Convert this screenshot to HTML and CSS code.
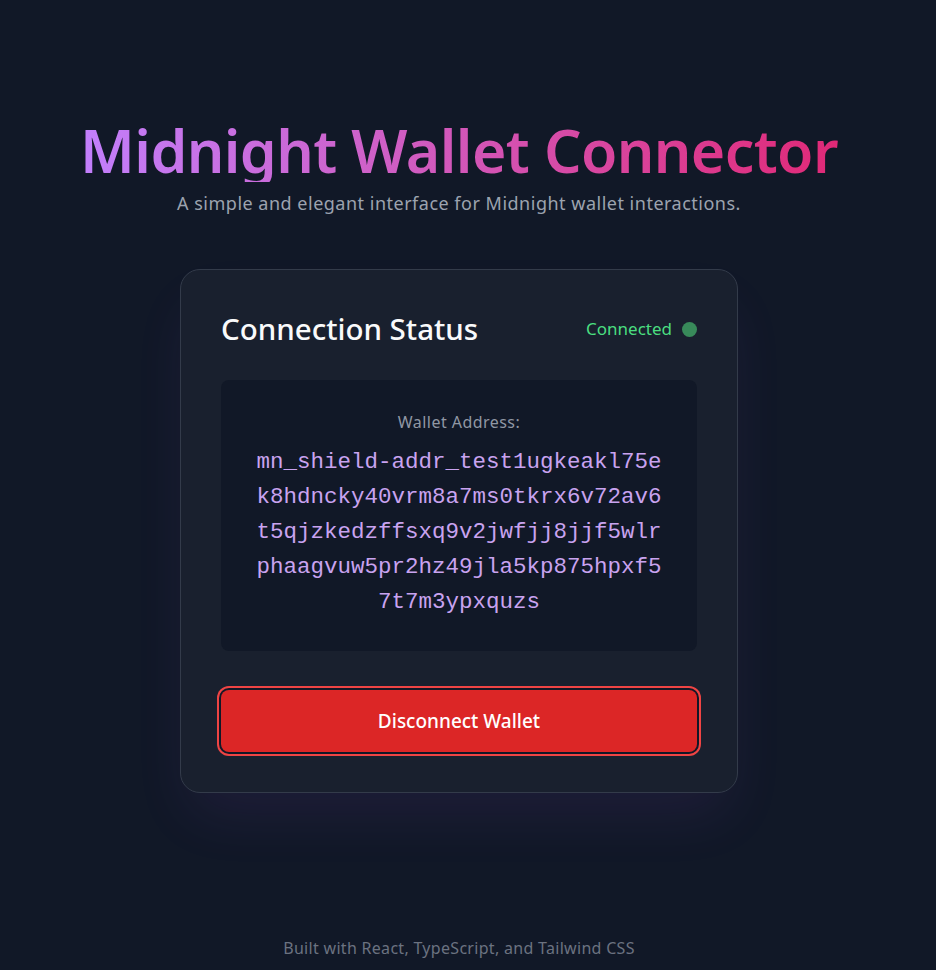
FILE: index.html
```html
<!DOCTYPE html>
<html lang="en">
<head>
<meta charset="utf-8">
<title>Midnight Wallet Connector</title>
<link rel="stylesheet" href="styles.css">
</head>
<body>
<div class="page">
  <header class="hero">
    <h1 class="title">Midnight Wallet Connector</h1>
    <p class="subtitle">A simple and elegant interface for Midnight wallet interactions.</p>
  </header>
  <main class="card">
    <div class="card-head">
      <h2 class="card-title">Connection Status</h2>
      <div class="status">
        <span class="status-text">Connected</span>
        <span class="status-dot"></span>
      </div>
    </div>
    <div class="address-box">
      <p class="address-label">Wallet Address:</p>
      <p class="address">mn_shield-addr_test1ugkeakl75ek8hdncky40vrm8a7ms0tkrx6v72av6t5qjzkedzffsxq9v2jwfjj8jjf5wlrphaagvuw5pr2hz49jla5kp875hpxf57t7m3ypxquzs</p>
    </div>
    <button class="disconnect" type="button">Disconnect Wallet</button>
  </main>
  <footer class="footer">Built with React, TypeScript, and Tailwind CSS</footer>
</div>
</body>
</html>
```
FILE: styles.css
```css
* { box-sizing: border-box; }
html, body { margin: 0; padding: 0; }
body {
  background: #111827;
  font-family: "Noto Sans", "Open Sans", sans-serif;
  color: #f3f4f6;
}
.page {
  width: 918px;
  min-height: 970px;
  display: flex;
  flex-direction: column;
  align-items: center;
  padding-top: 118px;
}
.hero {
  display: flex;
  flex-direction: column;
  align-items: center;
}
.title {
  margin: 0;
  font-size: 59px;
  line-height: 64px;
  font-weight: 600;
  letter-spacing: -0.6px;
  background: linear-gradient(90deg, #c27ffc 0%, #cf5fc6 40%, #d9459e 70%, #e02977 100%);
  -webkit-background-clip: text;
  background-clip: text;
  color: transparent;
}
.subtitle {
  margin: 7px 0 0;
  font-size: 18px;
  line-height: 28px;
  letter-spacing: 0.5px;
  color: #9ca3af;
}
.card {
  margin-top: 52px;
  width: 558px;
  padding: 40px;
  background: #19202e;
  border: 1px solid #333b4a;
  border-radius: 20px;
  box-shadow: 0 30px 60px -10px rgba(168, 85, 247, 0.09);
}
.card-head {
  display: flex;
  justify-content: space-between;
  align-items: center;
  margin-bottom: 32px;
}
.card-title {
  margin: 0;
  font-size: 29.5px;
  line-height: 38px;
  font-weight: 500;
  color: #f9fafb;
}
.status {
  display: flex;
  align-items: center;
  gap: 10px;
}
.status-text {
  font-size: 17px;
  line-height: 24px;
  color: #4ade80;
}
.status-dot {
  width: 15px;
  height: 15px;
  border-radius: 50%;
  background: #388a5a;
}
.address-box {
  background: #111827;
  border-radius: 8px;
  padding: 31px 32px 31px;
  text-align: center;
}
.address-label {
  margin: 0 0 12px;
  font-size: 16px;
  line-height: 22px;
  letter-spacing: 0.45px;
  color: #9097a4;
}
.address {
  margin: 0;
  font-family: "Liberation Mono", "DejaVu Sans Mono", monospace;
  font-size: 22.5px;
  line-height: 35px;
  color: #c9a3f0;
  word-break: break-all;
}
.disconnect {
  display: block;
  width: 100%;
  margin-top: 39px;
  height: 62px;
  border: none;
  border-radius: 8px;
  background: #dc2626;
  color: #ffffff;
  font-family: "Noto Sans", "Open Sans", sans-serif;
  font-size: 19px;
  font-weight: 500;
  box-shadow: 0 0 0 2px #111827, 0 0 0 4px #ef4444;
  cursor: pointer;
}
.footer {
  margin-top: auto;
  padding-bottom: 10px;
  font-size: 16px;
  line-height: 24px;
  letter-spacing: 0.3px;
  color: #6b7280;
}
```
